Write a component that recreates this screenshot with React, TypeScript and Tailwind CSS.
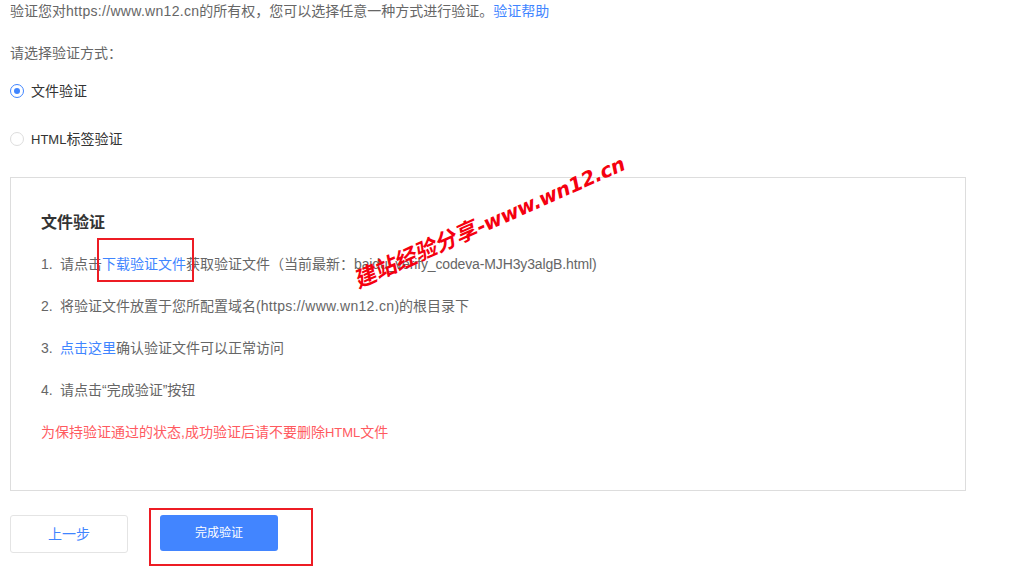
const font = "font-['Liberation_Sans','Noto_Sans_CJK_SC',sans-serif]"

const steps = [
    <>请点击<a className="text-[#3f85ff]">下载验证文件</a>获取验证文件（当前最新：<span className="tracking-[-0.14px]">baidu_verify_codeva-MJH3y3algB.html)</span></>,
    <>将验证文件放置于您所配置域名(<span className="tracking-[0.32px]">https://www.wn12.cn</span>)的根目录下</>,
    <><a className="text-[#3f85ff]">点击这里</a>确认验证文件可以正常访问</>,
    <>请点击“完成验证”按钮</>,
]

export default function App() {
    return (
        <div className={`${font} relative h-[584px] w-[1014px] overflow-hidden bg-white pl-[10px] text-[14px] text-[#666]`}>
            {/* Intro */}
            <p className="flex h-[22px] items-center">
                <span>验证您对<span className="tracking-[0.3px]">https://www.wn12.cn</span>的所有权，您可以选择任意一种方式进行验证。</span>
                <a className="text-[#3f85ff]">验证帮助</a>
            </p>
            <p className="mt-[20px] flex h-[22px] items-center">请选择验证方式：</p>

            {/* Radios */}
            <label className="mt-[16px] flex h-[22px] items-center gap-[7px] text-[#333]">
                <span className="flex h-[14px] w-[14px] items-center justify-center rounded-full border border-[#3f85ff]">
                    <span className="h-[6px] w-[6px] rounded-full bg-[#3f85ff]" />
                </span>
                文件验证
            </label>
            <label className="mt-[26px] flex h-[22px] items-center gap-[7px] text-[#333]">
                <span className="h-[14px] w-[14px] rounded-full border border-[#ddd]" />
                <span><span className="text-[13px]">HTML</span>标签验证</span>
            </label>

            {/* File verification panel */}
            <div className="mt-[27px] h-[314px] w-[956px] border border-[#ddd] pl-[30px] pt-[33px]">
                <h3 className="flex h-[24px] items-center text-[16px] font-bold text-[#333]">文件验证</h3>
                <ol className="mt-[18px] flex flex-col gap-[20px]">
                    {steps.map((step, i) => (
                        <li key={i} className="flex h-[22px] items-center whitespace-pre">
                            <span className="w-[19px]">{i + 1}.</span>
                            <span>{step}</span>
                        </li>
                    ))}
                    <li className="flex h-[22px] items-center text-[#ff5a5f]">
                        <span>为保持验证通过的状态,成功验证后请不要删除<span className="text-[13px]">HTML</span>文件</span>
                    </li>
                </ol>
            </div>

            {/* Actions */}
            <div className="mt-[24px] flex gap-[32px]">
                <button className="h-[38px] w-[118px] rounded-[3px] border border-[#e4e4e4] bg-white text-[14px] text-[#3f85ff]">上一步</button>
                <button className="h-[36px] w-[118px] rounded-[3px] bg-[#4285ff] text-[12px] text-white">完成验证</button>
            </div>

            {/* Screenshot annotations */}
            <div className="absolute left-[97px] top-[238px] h-[44px] w-[97px] border-2 border-[#ed1c24]" />
            <div className="absolute left-[149px] top-[508px] h-[58px] w-[164px] border-2 border-[#ed1c24]" />
            <div className="absolute left-[344px] top-[208px] flex origin-center -rotate-[24deg] -skew-x-[12deg] items-baseline whitespace-nowrap text-[22px] font-bold leading-[28px] text-[#f5000f]">
                建站经验分享<span className="font-['DejaVu_Sans',sans-serif] text-[20px] tracking-[-0.3px]">-www.wn12.cn</span>
            </div>
        </div>
    )
}
